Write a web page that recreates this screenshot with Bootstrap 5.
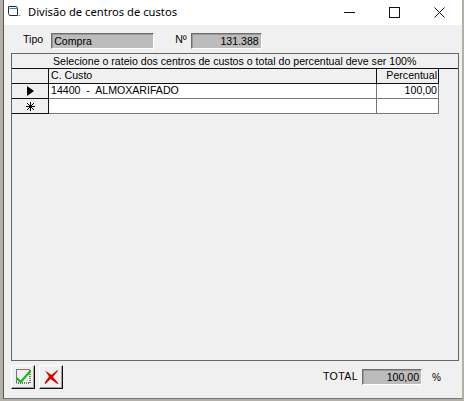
<!DOCTYPE html>
<html lang="en">
<head>
  <meta charset="UTF-8">
  <title>Divisão de centros de custos</title>
  <link href="https://cdn.jsdelivr.net/npm/bootstrap@5.3.3/dist/css/bootstrap.min.css" rel="stylesheet">
  <style>
    html, body { height: 100%; }
    body {
      background: #b4b0a8;
      font-family: "Liberation Sans", Arial, sans-serif;
      font-size: 10.6px;
      color: #000;
      overflow: hidden;
    }
    .win {
      margin-left: 3px;
      height: 399px;
      width: 459px;
      background: #f0f0f0;
      border-left: 1px solid #555;
      border-bottom: 1px solid #777;
    }
    .titlebar {
      height: 25px;
      background: #fff;
      font-family: "Noto Sans", sans-serif;
      font-size: 11.2px;
      padding: 0 0 1px 4px;
    }
    .titlebar .ttl { margin-left: 6px; }
    .winbtn { width: 45px; height: 24px; }
    .tipo-row { height: 28px; padding: 8px 0 0 19px; line-height: 13px; }
    .fld {
      background: #bcbcbc;
      border: 1px solid;
      border-color: #6e6e6e #fff #fff #6e6e6e;
      box-shadow: inset 1px 1px 0 #999;
      height: 16px;
      line-height: 15px;
      padding: 0 2px;
    }
    .fld-tipo { width: 103px; margin-left: 8px; }
    .fld-num { width: 71px; margin-left: 4px; text-align: right; }
    .lbl-num { margin-left: 21px; }
    .grid-box {
      margin-left: 7px;
      width: 448px;
      height: 308px;
      border: 1px solid #666;
    }
    .grid-caption {
      height: 15px;
      line-height: 14px;
      padding-left: 41px;
      border-bottom: 1px solid #111;
      white-space: nowrap;
    }
    .grid-row { height: 15px; line-height: 13px; }
    .grid-row > div { border-bottom: 1px solid #777; }
    .c-ind { width: 37px; border-right: 1px solid #111; border-bottom-color: #111 !important; }
    .c-custo { width: 328px; border-right: 1px solid #777; padding-left: 2px; background: #fff; }
    .c-perc { width: 62px; border-right: 1px solid #777; background: #fff; text-align: right; padding-right: 1px; }
    .grid-row.head .c-custo, .grid-row.head .c-perc { background: #f0f0f0; border-right-color: #111; }
    .grid-row.head > div { border-bottom-color: #111; }
    .footer-row { height: 37px; padding: 4px 0 0 7px; }
    .tool {
      width: 24px; height: 24px;
      background: #f0f0f0;
      border: 0;
      border-right: 1px solid #111;
      border-bottom: 1px solid #111;
      border-top: 1px solid #fff;
      border-left: 1px solid #fff;
      box-shadow: inset -1px -1px 0 #a0a0a0;
      padding: 0;
      margin-right: 4px;
    }
    .tot-area { margin: 4px 21px 0 auto; }
    .tot-lbl { letter-spacing: .4px; }
    .fld-tot { width: 60px; margin: 0 10px 0 4px; text-align: right; }
    .pct { font-size: 10px; }
  </style>
</head>
<body>
<div class="win d-flex flex-column">
  <div class="titlebar d-flex align-items-center">
    <svg width="14" height="14" viewBox="0 0 14 14" fill="none" stroke="#1c2b3a"><path d="M.5 1.5h8l1 2v7h-8l-1-2z"/><path d="M1.5 3.5h8" stroke="#2a8fb0"/><path d="M10.5 10.5h2" stroke="#888"/></svg>
    <span class="ttl">Divisão de centros de custos</span>
    <div class="ms-auto d-flex">
      <div class="winbtn d-flex align-items-center justify-content-center"><svg width="11" height="11" stroke="#111"><path d="M0 5.5h11"/></svg></div>
      <div class="winbtn d-flex align-items-center justify-content-center"><svg width="11" height="11" fill="none" stroke="#111"><rect x=".5" y=".5" width="10" height="10"/></svg></div>
      <div class="winbtn d-flex align-items-center justify-content-center"><svg width="11" height="11" stroke="#111"><path d="M.5.5l10 10M10.5.5l-10 10"/></svg></div>
    </div>
  </div>
  <div class="tipo-row d-flex align-items-start">
    <span>Tipo</span>
    <div class="fld fld-tipo">Compra</div>
    <span class="lbl-num">Nº</span>
    <div class="fld fld-num">131.388</div>
  </div>
  <div class="grid-box">
    <div class="grid-caption">Selecione o rateio dos centros de custos o total do percentual deve ser 100%</div>
    <div class="grid-row head d-flex">
      <div class="c-ind"></div>
      <div class="c-custo">C. Custo</div>
      <div class="c-perc">Percentual</div>
    </div>
    <div class="grid-row d-flex">
      <div class="c-ind d-flex align-items-center justify-content-center"><svg width="7" height="10"><path d="M0 0l7 5-7 5z" fill="#000"/></svg></div>
      <div class="c-custo">14400 &nbsp;-&nbsp; ALMOXARIFADO</div>
      <div class="c-perc">100,00</div>
    </div>
    <div class="grid-row d-flex">
      <div class="c-ind d-flex align-items-center justify-content-center"><svg width="9" height="9" stroke="#000"><path d="M4.5 0v9M0 4.5h9M1 1l7 7M8 1l-7 7"/></svg></div>
      <div class="c-custo"></div>
      <div class="c-perc"></div>
    </div>
  </div>
  <div class="footer-row d-flex align-items-start">
    <button class="tool d-flex align-items-center justify-content-center" type="button" aria-label="OK"><svg width="16" height="16" viewBox="0 0 16 16"><rect x="1.5" y=".5" width="13.5" height="13.5" fill="none" stroke="#000" stroke-dasharray="1 1"/><path d="M1.5 9l4.2 4L15.5 2" fill="none" stroke="#14b814" stroke-width="2.2"/></svg></button>
    <button class="tool d-flex align-items-center justify-content-center" type="button" aria-label="Cancelar"><svg width="16" height="16" viewBox="0 0 16 16"><path d="M2 1.5L8.5 6l6-5 .5.8L10 8l5.500 6.500-1 .5-7-5-5 5-1-1L6 7.500z" fill="#d80000"/></svg></button>
    <div class="tot-area d-flex align-items-center">
      <span class="tot-lbl">TOTAL</span>
      <div class="fld fld-tot">100,00</div>
      <span class="pct">%</span>
    </div>
  </div>
</div>
</body>
</html>
